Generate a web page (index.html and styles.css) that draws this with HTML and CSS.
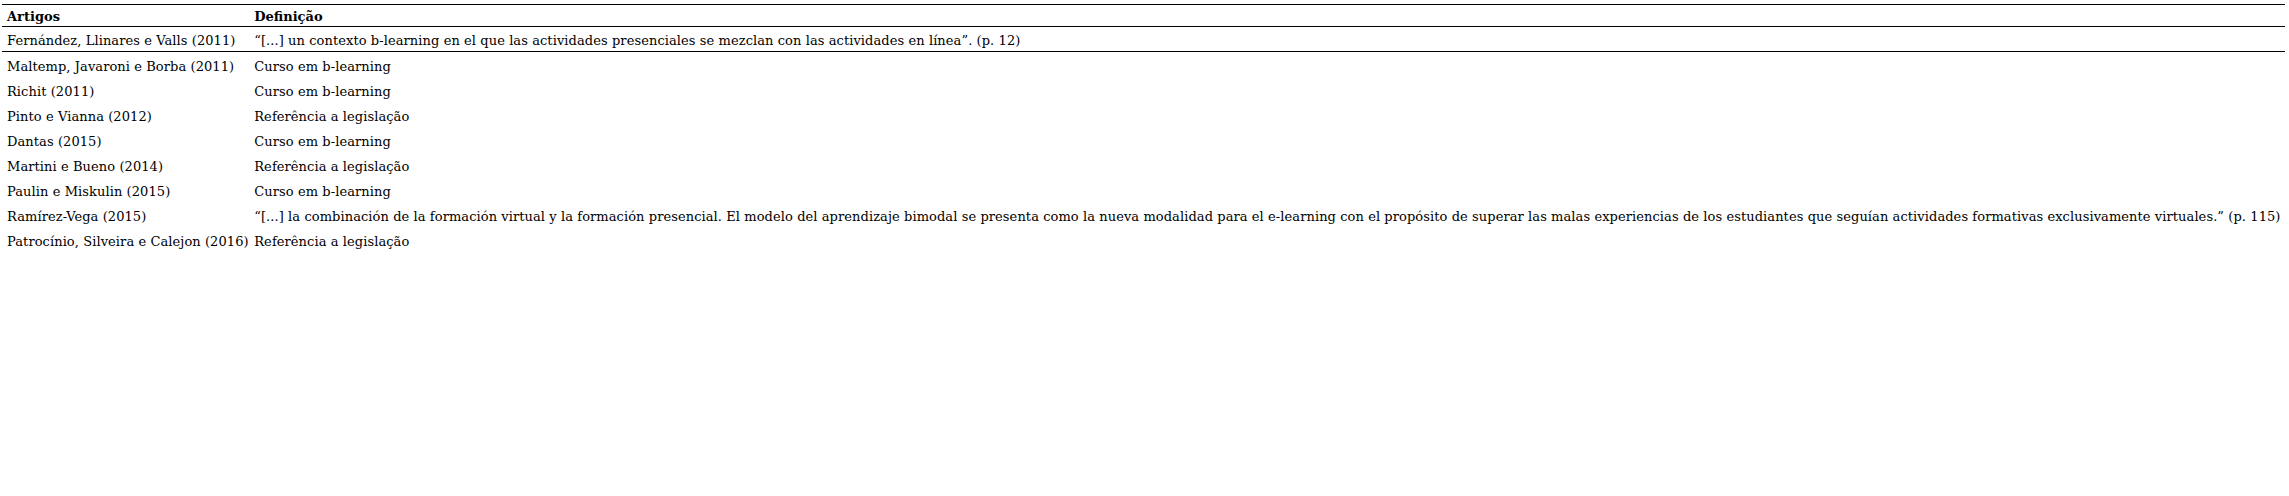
FILE: index.html
```html
<!DOCTYPE html>
<html lang="pt">
<head>
  <meta charset="UTF-8" />
  <title>Artigos e definições</title>
  <link rel="stylesheet" href="styles.css">
</head>
<body>
  <table class="def-table">
    <thead>
      <tr>
        <th>Artigos</th>
        <th>Definição</th>
      </tr>
    </thead>
    <tbody>
      <tr class="first-row">
        <td>Fernández, Llinares e Valls (2011)</td>
        <td>“[...] un contexto b-learning en el que las actividades presenciales se mezclan con las actividades en línea”. (p. 12)</td>
      </tr>
      <tr>
        <td>Maltemp, Javaroni e Borba (2011)</td>
        <td>Curso em b-learning</td>
      </tr>
      <tr>
        <td>Richit (2011)</td>
        <td>Curso em b-learning</td>
      </tr>
      <tr>
        <td>Pinto e Vianna (2012)</td>
        <td>Referência a legislação</td>
      </tr>
      <tr>
        <td>Dantas (2015)</td>
        <td>Curso em b-learning</td>
      </tr>
      <tr>
        <td>Martini e Bueno (2014)</td>
        <td>Referência a legislação</td>
      </tr>
      <tr>
        <td>Paulin e Miskulin (2015)</td>
        <td>Curso em b-learning</td>
      </tr>
      <tr>
        <td>Ramírez-Vega (2015)</td>
        <td>“[...] la combinación de la formación virtual y la formación presencial. El modelo del aprendizaje bimodal se presenta como la nueva modalidad para el e-learning con el propósito de superar las malas experiencias de los estudiantes que seguían actividades formativas exclusivamente virtuales.” (p. 115)</td>
      </tr>
      <tr>
        <td>Patrocínio, Silveira e Calejon (2016)</td>
        <td>Referência a legislação</td>
      </tr>
    </tbody>
  </table>
</body>
</html>
```

FILE: styles.css
```css
* {
  margin: 0;
  padding: 0;
  box-sizing: border-box;
}
body {
  font-family: "DejaVu Serif", "Liberation Serif", serif;
  font-size: 13px;
  line-height: 15px;
  color: #000;
  background: #fff;
  padding: 4px 4px 0 2px;
}
/* Table */
.def-table {
  width: 100%;
  border-collapse: collapse;
  border-top: 1px solid #000;
}
.def-table th {
  text-align: left;
  font-weight: bold;
  height: 22px;
  padding: 4px 0 2px 5px;
  border-bottom: 1px solid #000;
  white-space: nowrap;
  vertical-align: top;
}
.def-table td {
  height: 25px;
  padding: 7px 0 3px 5px;
  white-space: nowrap;
  vertical-align: top;
  letter-spacing: 0.08px;
}
.def-table .first-row td {
  padding-top: 6px;
  border-bottom: 1px solid #000;
}
```
